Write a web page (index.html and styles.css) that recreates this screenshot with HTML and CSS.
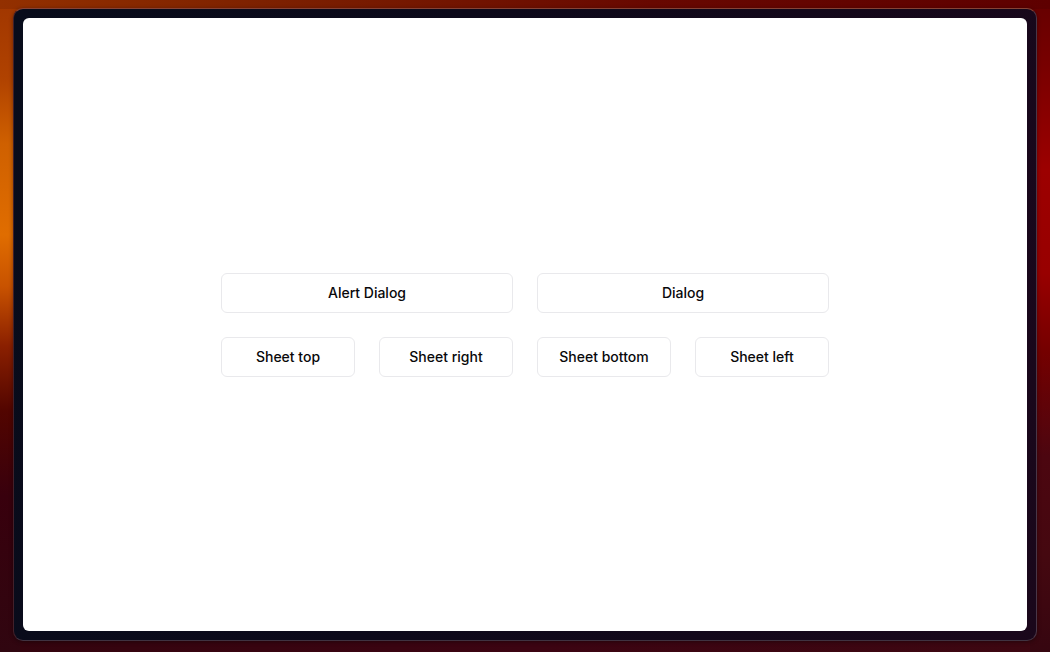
FILE: index.html
```html
<!DOCTYPE html>
<html lang="en">
<head>
<meta charset="utf-8">
<meta name="viewport" content="width=device-width, initial-scale=1">
<title>Dialogs and sheets</title>
<link rel="stylesheet" href="styles.css">
</head>
<body class="desktop">
<div class="window">
<main class="page">
<div class="actions">
<button type="button" class="button wide">Alert Dialog</button>
<button type="button" class="button wide">Dialog</button>
<button type="button" class="button">Sheet top</button>
<button type="button" class="button">Sheet right</button>
<button type="button" class="button">Sheet bottom</button>
<button type="button" class="button">Sheet left</button>
</div>
</main>
</div>
</body>
</html>
```
FILE: styles.css
```css
* {
  box-sizing: border-box;
}

.desktop {
  margin: 0;
  min-height: 100vh;
  display: flex;
  padding: 8px 13px 11px;
  font-family: Inter, "Liberation Sans", sans-serif;
  background:
    linear-gradient(90deg, #933000, #7d2100 25%, #680800 62%, #5e0000) top / 100% 9px no-repeat,
    linear-gradient(#a03600, #b04200 12%, #cf6000 22%, #e06d00 36%, #c85200 44%, #8b2000 53%, #520500 63%, #38000d 76%, #300610) left / 20px 100% no-repeat,
    linear-gradient(#650000, #780000 10%, #9c0000 26%, #980000 42%, #740000 54%, #4c0610 70%, #450810 85%, #360610) right / 20px 100% no-repeat,
    linear-gradient(90deg, #34040e, #3c0412 50%, #3d0711);
}

.window {
  flex: 1;
  display: flex;
  padding: 9px;
  border: 1px solid;
  border-color: #864235 #493647 #403341 #42202a;
  border-radius: 10px;
  background: linear-gradient(100deg, #080c1b, #0c091a 40%, #1a071b);
  box-shadow: 0 1px 4px #0006;
}

.page {
  flex: 1;
  display: grid;
  place-items: center;
  padding: 24px;
  border-radius: 6px;
  background: #fff;
}

.actions {
  width: 100%;
  max-width: 608px;
  display: grid;
  grid-template-columns: repeat(4, 1fr);
  gap: 24px;
}

.button {
  height: 40px;
  padding: 0 16px;
  border: 1px solid #e9e9ec;
  border-radius: 6px;
  background: #fff;
  color: #09090b;
  font: inherit;
  font-size: 14px;
  font-weight: 500;
  line-height: 20px;
  white-space: nowrap;
}

.wide {
  grid-column: span 2;
}
```
